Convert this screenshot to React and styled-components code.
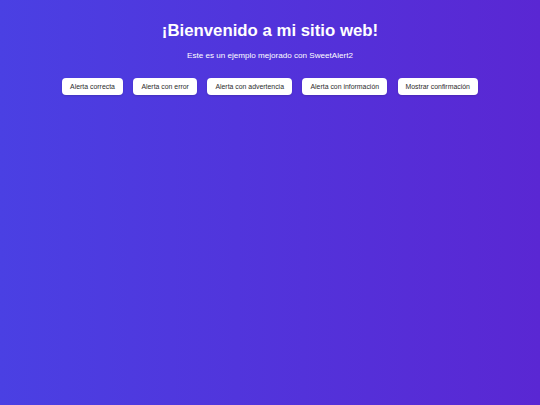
import React from "react";
import styled, { createGlobalStyle } from "styled-components";

const Global = createGlobalStyle`
  html, body { margin: 0; padding: 0; height: 100%; }
  body {
    font-family: "Liberation Sans", Arial, sans-serif;
    background: linear-gradient(90deg, #4a40e3 0%, #5a27d3 100%);
    min-height: 405px;
  }
`;

const Page = styled.main`
  display: flex;
  flex-direction: column;
  align-items: center;
  padding-top: 20px;
  color: #ffffff;
  text-align: center;
`;

const Title = styled.h1`
  margin: 0;
  font-size: 16.8px;
  line-height: 22px;
  font-weight: 700;
`;

const Subtitle = styled.p`
  margin: 9px 0 0;
  font-size: 8.1px;
  line-height: 10px;
`;

const Actions = styled.div`
  display: flex;
  justify-content: center;
  gap: 10.5px;
  margin-top: 17px;
`;

const Button = styled.button`
  background: #ffffff;
  color: #2b2b2b;
  border: none;
  border-radius: 4px;
  padding: 4px 8px;
  height: 17px;
  font-family: "Liberation Sans", Arial, sans-serif;
  font-size: 6.9px;
  line-height: 9px;
  cursor: pointer;
  box-shadow: 0 1px 2px rgba(0, 0, 0, 0.15);
`;

const labels = [
  "Alerta correcta",
  "Alerta con error",
  "Alerta con advertencia",
  "Alerta con información",
  "Mostrar confirmación",
];

export default function App() {
  return (
    <>
      <Global />
      <Page>
        <Title>¡Bienvenido a mi sitio web!</Title>
        <Subtitle>Este es un ejemplo mejorado con SweetAlert2</Subtitle>
        <Actions>
          {labels.map((l) => (
            <Button key={l}>{l}</Button>
          ))}
        </Actions>
      </Page>
    </>
  );
}
